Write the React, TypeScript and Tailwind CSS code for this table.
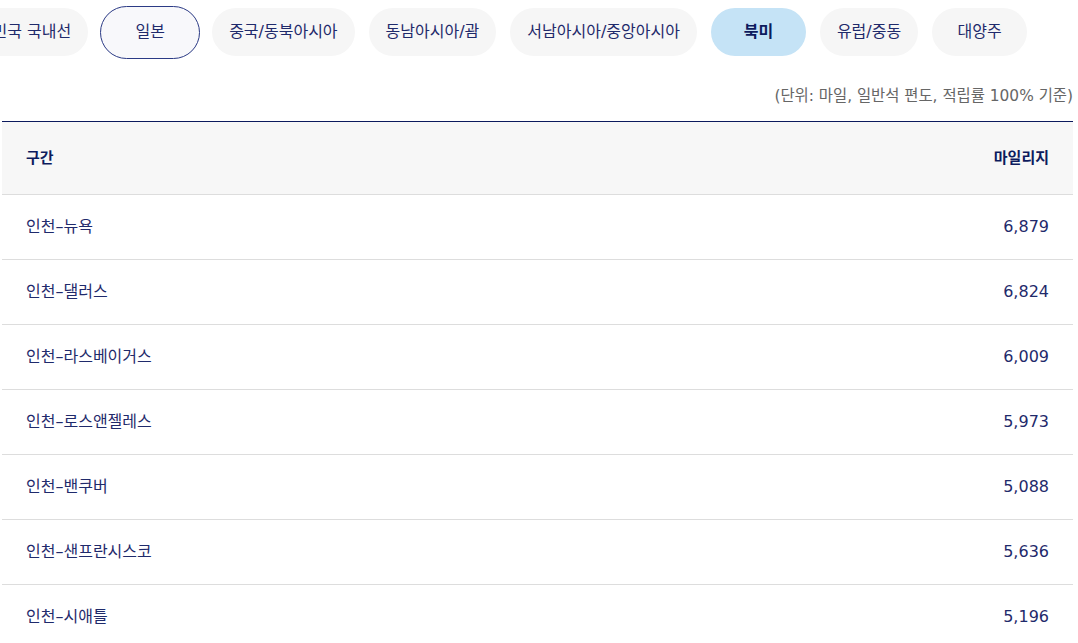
import React from "react"

const tabs = [
  { label: "대한민국 국내선" },
  { label: "일본", focused: true },
  { label: "중국/동북아시아" },
  { label: "동남아시아/괌" },
  { label: "서남아시아/중앙아시아" },
  { label: "북미", active: true },
  { label: "유럽/중동" },
  { label: "대양주" },
]

const rows = [
  ["인천–뉴욕", "6,879"],
  ["인천–댈러스", "6,824"],
  ["인천–라스베이거스", "6,009"],
  ["인천–로스앤젤레스", "5,973"],
  ["인천–밴쿠버", "5,088"],
  ["인천–샌프란시스코", "5,636"],
  ["인천–시애틀", "5,196"],
]

export default function App() {
  return (
    <div
      className="h-[643px] w-[1078px] overflow-hidden bg-white text-[16px] text-[#1f2a6b]"
      style={{ fontFamily: '"DejaVu Sans", "Noto Sans CJK KR", sans-serif' }}
    >
      {/* Region tabs (scrolled) */}
      <div className="mt-[8px] ml-[-54px] flex h-12 items-center gap-[14px] whitespace-nowrap">
        {tabs.map((t) =>
          t.focused ? (
            <button
              key={t.label}
              className="-mx-[2px] flex h-[53px] min-w-[100px] items-center justify-center rounded-full border border-[#2b3a85] bg-[#f8f8fb] px-[19px] text-[#1f2a6b]"
            >
              {t.label}
            </button>
          ) : (
            <button
              key={t.label}
              className={
                t.active
                  ? "flex h-12 min-w-[95px] items-center justify-center rounded-full bg-[#c5e3f6] px-[17px] font-bold text-[#0d1b5e]"
                  : "flex h-12 min-w-[95px] items-center justify-center rounded-full bg-[#f6f6f6] px-[17px] text-[#1f2a6b]"
              }
            >
              {t.label}
            </button>
          )
        )}
      </div>

      {/* Unit note */}
      <p className="mt-[29px] pr-[5px] text-right text-[15.4px] leading-[22px] text-[#666666]">
        (단위: 마일, 일반석 편도, 적립률 100% 기준)
      </p>

      {/* Mileage table */}
      <div className="mt-[14px] ml-[2px] w-[1071px] border-t border-[#0c1a5e]">
        <div className="flex h-[73px] items-center justify-between border-b border-[#dddddd] bg-[#f7f7f7] px-[24px] text-[15px] font-bold text-[#0d1b5e]">
          <span>구간</span>
          <span>마일리지</span>
        </div>
        {rows.map(([route, miles]) => (
          <div
            key={route}
            className="flex h-[65px] items-center justify-between border-b border-[#dddddd] px-[24px]"
          >
            <span>{route}</span>
            <span>{miles}</span>
          </div>
        ))}
      </div>
    </div>
  )
}
